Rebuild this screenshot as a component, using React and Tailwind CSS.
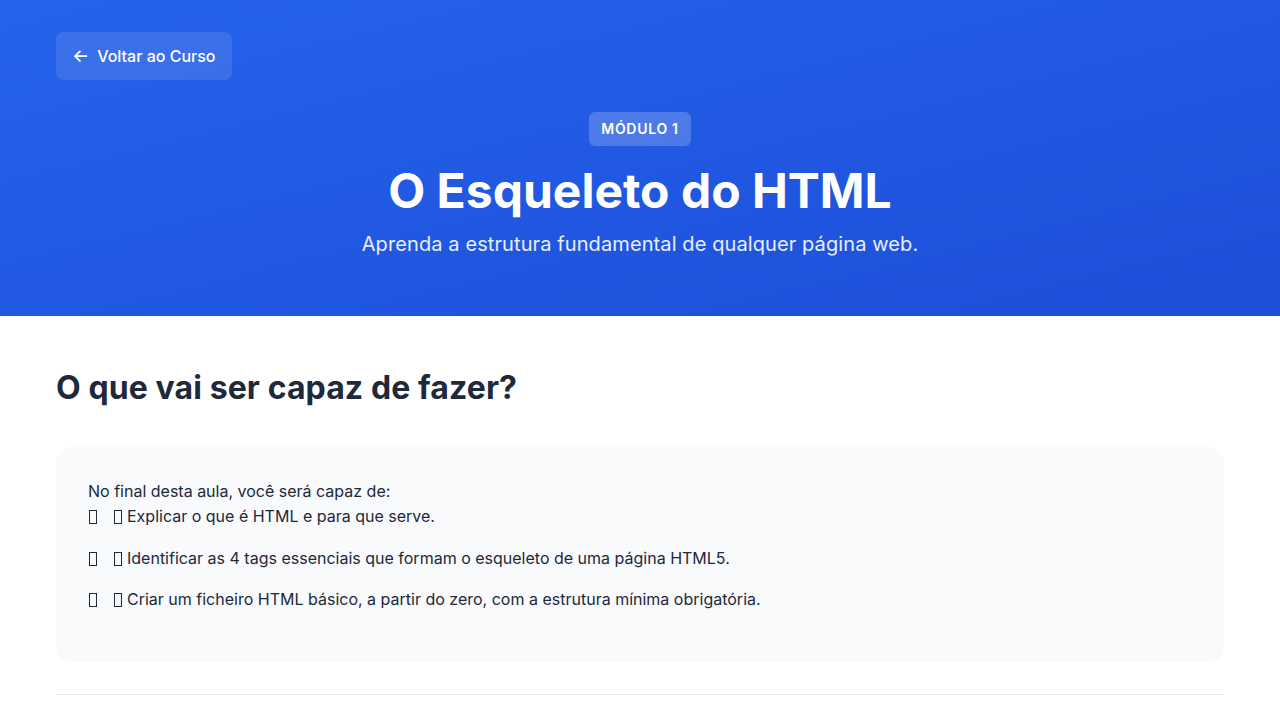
import React from 'react';

const goals = [
  'Explicar o que é HTML e para que serve.',
  'Identificar as 4 tags essenciais que formam o esqueleto de uma página HTML5.',
  'Criar um ficheiro HTML básico, a partir do zero, com a estrutura mínima obrigatória.',
];

// empty box, like the missing-glyph boxes the reference shows for its emoji
function Tofu({ className = '' }) {
  return <span className={`inline-block h-[14px] w-[8px] border border-[#1e293b] align-[-2px] ${className}`} />;
}

export default function App() {
  return (
    <div className="min-h-screen bg-white font-['Inter',_'Noto_Sans',_sans-serif] text-[#1f2937]">
      {/* Hero */}
      <header className="bg-gradient-to-br from-[#2563eb] to-[#1d4ed8] px-14 pt-8 pb-[58px] text-white">
        <button
          type="button"
          className="flex h-12 items-center gap-2 rounded-lg bg-white/10 px-4 text-base font-medium"
        >
          <span className="text-lg leading-none">←</span>
          Voltar ao Curso
        </button>
        <div className="mt-8 flex flex-col items-center text-center">
          <span className="rounded-md bg-white/20 px-3 py-[7px] text-sm font-semibold tracking-wider">
            MÓDULO 1
          </span>
          <h1 className="mt-4 text-5xl leading-[1.2] font-bold">O Esqueleto do HTML</h1>
          <p className="mt-[10px] text-xl leading-7 tracking-[0.1px] text-white/90">
            Aprenda a estrutura fundamental de qualquer página web.
          </p>
        </div>
      </header>

      {/* Conteúdo */}
      <main className="px-14 pt-12">
        <h2 className="text-[32px] leading-[1.5] font-bold tracking-[0.1px] text-[#1e293b]">O que vai ser capaz de fazer?</h2>
        <div className="mt-[35px] rounded-2xl bg-[#f8fafc] px-8 pt-8 pb-[33px] text-base leading-[1.6] text-[#1e293b]">
          <p>No final desta aula, você será capaz de:</p>
          <ul>
            {goals.map((g) => (
              <li key={g} className="mb-4">
                <Tofu className="ml-px" />
                <Tofu className="ml-[17px] mr-[5px]" />
                {g}
              </li>
            ))}
          </ul>
        </div>
        <hr className="mt-8 border-[#e2e8f0]" />
      </main>
    </div>
  );
}
